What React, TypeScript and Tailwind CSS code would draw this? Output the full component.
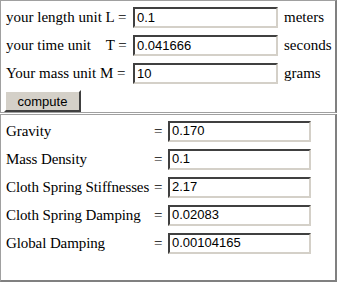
const units = [
  { label: "your length unit L =", value: "0.1", unit: "meters" },
  { label: "your time unit\u00a0\u00a0\u00a0 T =", value: "0.041666", unit: "seconds" },
  { label: "Your mass unit M =", value: "10", unit: "grams" },
];

const results = [
  { label: "Gravity", value: "0.170" },
  { label: "Mass Density", value: "0.1" },
  { label: "Cloth Spring Stiffnesses", value: "2.17" },
  { label: "Cloth Spring Damping", value: "0.02083" },
  { label: "Global Damping", value: "0.00104165" },
];

function Field({ value, width }: { value: string; width: string }) {
  return (
    <div
      className={`${width} shrink-0 h-[21px] flex items-center pl-[2px] bg-white border-2 border-t-[#404040] border-l-[#404040] border-r-[#d4d0c8] border-b-[#d4d0c8] text-[13px] text-black font-['Liberation_Sans',Arial,sans-serif]`}
    >
      {value}
    </div>
  );
}

export default function App() {
  return (
    <div className="w-[338px] h-[282px] bg-white text-black text-[15px] font-['Liberation_Serif','Times_New_Roman',serif]">
      {/* Units */}
      <div className="w-[337px] h-[113px] border border-[#a0a0a0] border-r-2 border-r-[#808080] pt-[6px] px-[5px] flex flex-col gap-[7px]">
        {units.map((u) => (
          <div key={u.unit} className="h-[21px] flex items-center whitespace-pre">
            <span className="w-[127px] shrink-0">{u.label}</span>
            <Field value={u.value} width="w-[145px]" />
            <span className="ml-[6px]">{u.unit}</span>
          </div>
        ))}
        <button className="w-[77px] h-[22px] -ml-[2px] -mt-[1px] bg-[#d4d0c8] border-2 border-t-white border-l-white border-r-[#404040] border-b-[#404040] text-[13px] font-['Liberation_Sans',Arial,sans-serif] text-black">
          compute
        </button>
      </div>

      {/* Results */}
      <div className="w-[337px] h-[168px] mt-[1px] border border-[#a0a0a0] border-r-2 border-b-2 border-r-[#808080] border-b-[#808080] pt-[6px] px-[5px] flex flex-col gap-[8px]">
        {results.map((r) => (
          <div key={r.label} className="h-[20px] flex items-center whitespace-nowrap">
            <span className="w-[148px] shrink-0 tracking-[-0.1px]">{r.label}</span>
            <span className="w-[14px] shrink-0">=</span>
            <Field value={r.value} width="w-[143px]" />
          </div>
        ))}
      </div>
    </div>
  );
}
